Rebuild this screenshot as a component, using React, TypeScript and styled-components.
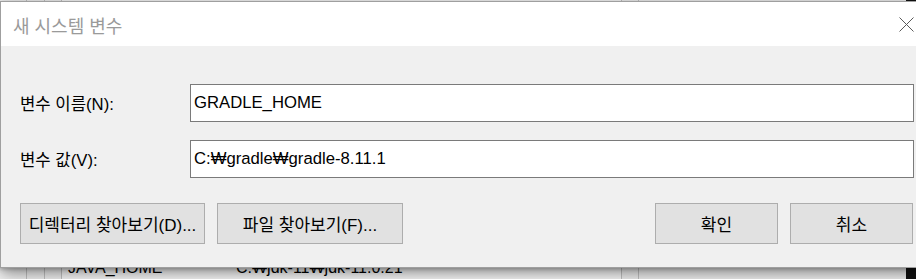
import React from 'react';
import styled, { createGlobalStyle } from 'styled-components';

const GlobalStyle = createGlobalStyle`
  html, body {
    margin: 0;
    padding: 0;
    overflow: hidden;
    background: #fff;
  }
  body {
    font-family: "Liberation Sans", "Noto Sans CJK KR", sans-serif;
  }
`;

const FONT = `"Liberation Sans", "Noto Sans CJK KR", sans-serif`;

const Stage = styled.div`
  position: relative;
  width: 916px;
  height: 279px;
  overflow: hidden;
  background: #fff;
`;

// window that sits behind the dialog (only its edges show)
const BgWindow = styled.div`
  height: 100%;
  display: grid;
  grid-template-columns: 26px 18px 17px 560px 17px 268px 10px;
  background: #fff;
`;

const BgCol = styled.div<{ $line?: boolean }>`
  border-left: ${p => (p.$line ? '1px solid #c8c8c8' : 'none')};
  background: #f7f7f7;
`;

const BgList = styled.div`
  border-left: 1px solid #c8c8c8;
  display: flex;
  flex-direction: column;
  justify-content: flex-end;
`;

const BgRow = styled.div`
  height: 22px;
  display: flex;
  align-items: center;
  font-family: ${FONT};
  font-size: 16px;
  color: #000;
  white-space: nowrap;
`;

const BgCell = styled.div<{ $w?: number }>`
  width: ${p => (p.$w ? `${p.$w}px` : 'auto')};
  padding-left: 6px;
`;

const BgScroll = styled.div`
  background: #111;
`;

const Dialog = styled.div`
  position: absolute;
  top: 1px;
  left: 0;
  width: 926px;
  height: 267px;
  box-sizing: border-box;
  border: 1px solid #9f9f9f;
  display: flex;
  flex-direction: column;
  background: #f0f0f0;
  box-shadow: 0 6px 16px rgba(0, 0, 0, 0.45), 0 1px 4px rgba(0, 0, 0, 0.25);
`;

const TitleBar = styled.div`
  height: 44px;
  flex-shrink: 0;
  display: flex;
  align-items: center;
  justify-content: space-between;
  padding: 1px 11px 0 12px;
  box-sizing: border-box;
  background: #fff;
`;

const Title = styled.div`
  font-family: ${FONT};
  font-size: 18px;
  color: #9a9a9a;
`;

const CloseIcon = styled.svg`
  width: 15px;
  height: 15px;
  display: block;
`;

const Body = styled.div`
  flex: 1;
  padding: 38px 11px 0 19px;
  display: flex;
  flex-direction: column;
`;

const FormGrid = styled.div`
  display: grid;
  grid-template-columns: 170px 1fr;
  row-gap: 18px;
  align-items: center;
`;

const Label = styled.div`
  font-family: ${FONT};
  font-size: 16.7px;
  color: #000;
  white-space: nowrap;
`;

const Field = styled.input`
  height: 38px;
  box-sizing: border-box;
  border: 1px solid #7a7a7a;
  background: #fff;
  padding: 0 3px;
  margin: 0;
  font-family: ${FONT};
  font-size: 16.7px;
  color: #000;
  outline: none;
  width: 100%;
`;

const ButtonRow = styled.div`
  margin-top: 25px;
  padding-right: 1px;
  display: flex;
  justify-content: space-between;
`;

const ButtonGroup = styled.div`
  display: flex;
  gap: 12px;
`;

const Button = styled.button<{ $w: number }>`
  width: ${p => p.$w}px;
  height: 41px;
  box-sizing: border-box;
  border: 1px solid #adadad;
  background: #e1e1e1;
  padding: 0;
  margin: 0;
  font-family: ${FONT};
  font-size: 17px;
  color: #000;
  white-space: nowrap;
  overflow: hidden;
  cursor: default;
`;

export default function App() {
  return (
    <Stage>
      <GlobalStyle />
      <BgWindow>
        <BgCol />
        <BgCol $line />
        <BgCol $line />
        <BgList>
          <BgRow>
            <BgCell $w={162}>JAVA_HOME</BgCell>
            <BgCell>C:₩jdk-11₩jdk-11.0.21</BgCell>
          </BgRow>
        </BgList>
        <BgCol $line />
        <BgCol $line />
        <BgScroll />
      </BgWindow>

      <Dialog>
        <TitleBar>
          <Title>새 시스템 변수</Title>
          <CloseIcon viewBox="0 0 15 15">
            <path d="M0.5 0.5 L14.5 14.5 M14.5 0.5 L0.5 14.5" stroke="#5a5a5a" strokeWidth="1" fill="none" />
          </CloseIcon>
        </TitleBar>
        <Body>
          <FormGrid>
            <Label>변수 이름(N):</Label>
            <Field readOnly value="GRADLE_HOME" />
            <Label>변수 값(V):</Label>
            <Field readOnly value="C:₩gradle₩gradle-8.11.1" />
          </FormGrid>
          <ButtonRow>
            <ButtonGroup>
              <Button $w={185}>디렉터리 찾아보기(D)...</Button>
              <Button $w={186}>파일 찾아보기(F)...</Button>
            </ButtonGroup>
            <ButtonGroup>
              <Button $w={123}>확인</Button>
              <Button $w={123}>취소</Button>
            </ButtonGroup>
          </ButtonRow>
        </Body>
      </Dialog>
    </Stage>
  );
}
